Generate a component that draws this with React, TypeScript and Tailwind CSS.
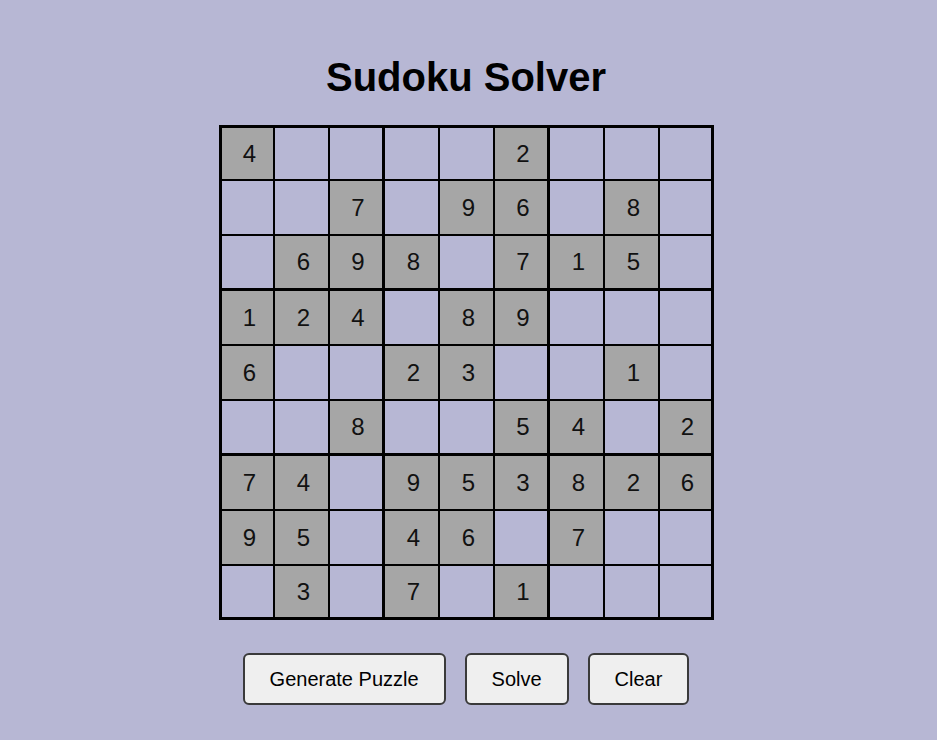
import React from 'react';

const PUZZLE: (number | null)[][] = [
  [4, null, null, null, null, 2, null, null, null],
  [null, null, 7, null, 9, 6, null, 8, null],
  [null, 6, 9, 8, null, 7, 1, 5, null],
  [1, 2, 4, null, 8, 9, null, null, null],
  [6, null, null, 2, 3, null, null, 1, null],
  [null, null, 8, null, null, 5, 4, null, 2],
  [7, 4, null, 9, 5, 3, 8, 2, 6],
  [9, 5, null, 4, 6, null, 7, null, null],
  [null, 3, null, 7, null, 1, null, null, null],
];

function cellBorders(r: number, c: number) {
  const cls = ['border', 'border-black'];
  if (c === 0) cls.push('border-l-[3px]');
  if (c === 8) cls.push('border-r-[3px]');
  if (c === 2 || c === 5) cls.push('border-r-2');
  if (r === 0) cls.push('border-t-[3px]');
  if (r === 8) cls.push('border-b-[3px]');
  if (r === 2 || r === 5) cls.push('border-b-2');
  return cls.join(' ');
}

export default function App() {
  return (
    <div
      className="min-h-screen w-full bg-[#b7b7d4] flex flex-col items-center pr-[5px]"
      style={{ fontFamily: '"Liberation Sans", Arial, sans-serif' }}
    >
      <h1 className="mt-[54px] mb-[25px] text-[40px] leading-[46px] font-bold text-black">
        Sudoku Solver
      </h1>

      <div className="grid grid-cols-9">
        {PUZZLE.map((row, r) =>
          row.map((val, c) => (
            <div
              key={`${r}-${c}`}
              className={`w-[55px] h-[55px] flex items-center justify-center pl-[5px] text-[24px] text-[#111] ${cellBorders(r, c)} ${
                val ? 'bg-[#a6a6a6]' : ''
              }`}
            >
              {val ?? ''}
            </div>
          ))
        )}
      </div>

      <div className="mt-[33px] flex gap-[19px]">
        {['Generate Puzzle', 'Solve', 'Clear'].map((label) => (
          <button
            key={label}
            className="px-[25px] py-3 text-[20px] leading-[24px] text-black bg-[#efefef] border-2 border-[#3a3a3a] rounded-[6px]"
          >
            {label}
          </button>
        ))}
      </div>
    </div>
  );
}
